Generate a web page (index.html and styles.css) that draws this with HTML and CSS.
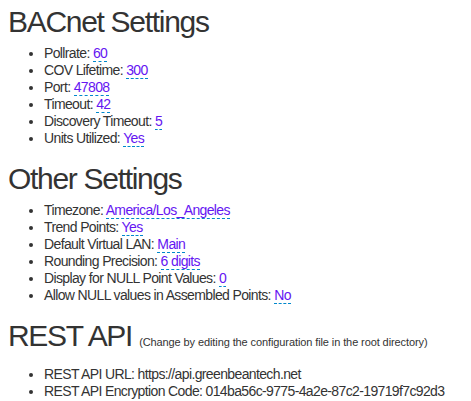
FILE: index.html
```html
<!DOCTYPE html>
<html>
<head>
<meta charset="utf-8">
<link rel="stylesheet" href="styles.css">
</head>
<body>
<h1 class="title">BACnet Settings</h1>
<ul class="list">
  <li>Pollrate: <a class="editable">60</a></li>
  <li>COV Lifetime: <a class="editable">300</a></li>
  <li>Port: <a class="editable">47808</a></li>
  <li>Timeout: <a class="editable">42</a></li>
  <li>Discovery Timeout: <a class="editable">5</a></li>
  <li>Units Utilized: <a class="editable">Yes</a></li>
</ul>
<h1 class="title">Other Settings</h1>
<ul class="list">
  <li>Timezone: <a class="editable">America/Los_Angeles</a></li>
  <li>Trend Points: <a class="editable">Yes</a></li>
  <li>Default Virtual LAN: <a class="editable">Main</a></li>
  <li>Rounding Precision: <a class="editable">6 digits</a></li>
  <li>Display for NULL Point Values: <a class="editable">0</a></li>
  <li>Allow NULL values in Assembled Points: <a class="editable">No</a></li>
</ul>
<h1 class="title">REST API <small class="note">(Change by editing the configuration file in the root directory)</small></h1>
<ul class="list">
  <li>REST API URL: https://api.greenbeantech.net</li>
  <li>REST API Encryption Code: 014ba56c-9775-4a2e-87c2-19719f7c92d3</li>
</ul>
</body>
</html>
```
FILE: styles.css
```css
html, body {
  background: #fff;
}
body {
  margin: 5px 8px 4px;
  font-family: "Liberation Sans", Arial, sans-serif;
  font-size: 14px;
  line-height: 17px;
  color: #333;
  letter-spacing: -0.63px;
}
.title {
  font-size: 30px;
  font-weight: normal;
  line-height: 33px;
  margin: 0;
  color: #333;
  letter-spacing: -1.3px;
}
.note {
  font-size: 11px;
  color: #333;
  font-weight: normal;
  letter-spacing: -0.1px;
}
.list {
  margin: 7px 0 15px;
  padding-left: 36px;
}
.list li {
  line-height: 17px;
}
.editable {
  color: #6515f2;
  text-decoration: none;
  border-bottom: 1px dashed #0088cc;
  cursor: pointer;
}
```
